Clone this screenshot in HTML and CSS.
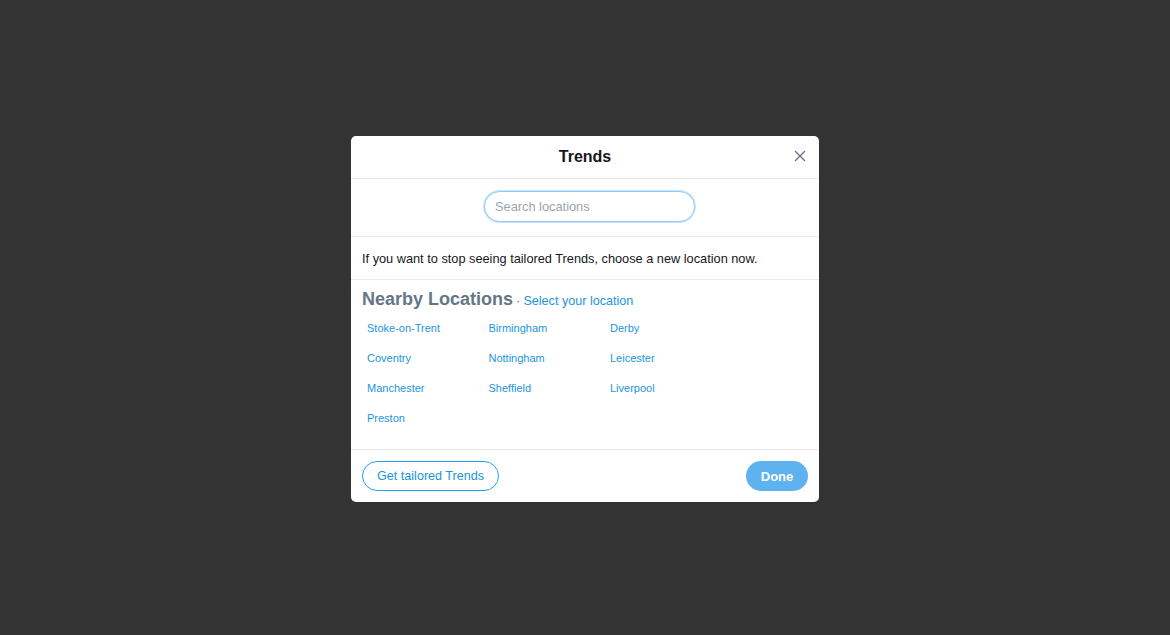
FILE: index.html
```html
<!DOCTYPE html>
<html>
<head>
<meta charset="utf-8">
<link rel="stylesheet" href="styles.css">
</head>
<body>
<div class="modal">
  <div class="header">
    <div class="title">Trends</div>
    <button class="close" aria-label="Close">
      <svg width="12" height="12" viewBox="0 0 12 12"><path d="M1 1L11 11M11 1L1 11" stroke="#657786" stroke-width="1.4" fill="none"/></svg>
    </button>
  </div>
  <div class="search-row">
    <input class="search" type="text" placeholder="Search locations">
  </div>
  <div class="notice">If you want to stop seeing tailored Trends, choose a new location now.</div>
  <div class="nearby">
    <div class="nearby-head"><span class="nearby-title">Nearby Locations</span><span class="dot">·</span><a class="select-link">Select your location</a></div>
    <div class="grid">
      <a class="loc">Stoke-on-Trent</a>
      <a class="loc">Birmingham</a>
      <a class="loc">Derby</a>
      <a class="loc">Coventry</a>
      <a class="loc">Nottingham</a>
      <a class="loc">Leicester</a>
      <a class="loc">Manchester</a>
      <a class="loc">Sheffield</a>
      <a class="loc">Liverpool</a>
      <a class="loc">Preston</a>
    </div>
  </div>
  <div class="footer">
    <button class="btn-outline">Get tailored Trends</button>
    <button class="btn-done">Done</button>
  </div>
</div>
</body>
</html>
```
FILE: styles.css
```css
html, body {
  margin: 0;
  padding: 0;
}
body {
  width: 1170px;
  height: 635px;
  background: #333333;
  font-family: "Liberation Sans", Arial, sans-serif;
  display: flex;
  justify-content: center;
  align-items: flex-start;
  padding-top: 136px;
  box-sizing: border-box;
}
.modal {
  width: 468px;
  background: #fff;
  border-radius: 5px;
  overflow: hidden;
}
.header {
  position: relative;
  height: 42px;
  border-bottom: 1px solid #e6ecf0;
  display: flex;
  align-items: center;
  justify-content: center;
}
.title {
  font-size: 16px;
  font-weight: bold;
  color: #14171a;
}
.close {
  position: absolute;
  right: 13px;
  top: 14px;
  width: 12px;
  height: 12px;
  padding: 0;
  border: 0;
  background: none;
  display: flex;
}
.search-row {
  height: 58px;
  box-sizing: border-box;
  padding: 12px 0 0 9px;
  display: flex;
  justify-content: center;
  border-bottom: 1px solid #e6ecf0;
}
.search {
  width: 211px;
  height: 31px;
  box-sizing: border-box;
  border: 1px solid #8ecbf5;
  box-shadow: 0 0 0 1px #c7e4fa;
  border-radius: 16px;
  padding: 0 10px;
  font-family: "Liberation Sans", Arial, sans-serif;
  font-size: 12.8px;
  outline: none;
}
.search::placeholder {
  color: #9aa6b0;
}
.notice {
  height: 43px;
  box-sizing: border-box;
  padding: 0 11px;
  display: flex;
  align-items: center;
  font-size: 12.75px;
  color: #14171a;
  border-bottom: 1px solid #e6ecf0;
}
.nearby {
  padding: 8px 11px 16px;
  border-bottom: 1px solid #e6ecf0;
}
.nearby-head {
  display: flex;
  align-items: baseline;
  height: 22px;
  line-height: 22px;
  margin-bottom: 3px;
}
.nearby-title {
  font-size: 18px;
  font-weight: bold;
  color: #657786;
}
.dot {
  font-size: 13px;
  color: #657786;
  margin: 0 3px 0 3px;
}
.select-link {
  font-size: 12.6px;
  color: #1b95e0;
}
.grid {
  display: grid;
  grid-template-columns: 121.5px 121.5px 121.5px;
  grid-auto-rows: 30px;
  padding-left: 5px;
}
.loc {
  font-size: 11px;
  color: #1b95e0;
  display: flex;
  align-items: center;
}
.footer {
  height: 52px;
  box-sizing: border-box;
  padding: 10px 11px;
  display: flex;
  justify-content: space-between;
  align-items: center;
}
.btn-outline {
  height: 30px;
  padding: 0 14px;
  border: 1px solid #1da1f2;
  border-radius: 15px;
  background: #fff;
  color: #1b95e0;
  font-family: "Liberation Sans", Arial, sans-serif;
  font-size: 12.6px;
}
.btn-done {
  height: 30px;
  width: 62px;
  border: 0;
  border-radius: 15px;
  background: #5eb2f0;
  color: #fff;
  font-family: "Liberation Sans", Arial, sans-serif;
  font-size: 13px;
  font-weight: bold;
}
```
